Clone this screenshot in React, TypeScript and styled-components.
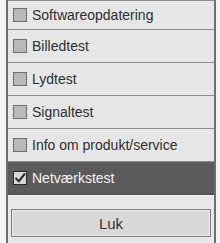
import React, { useState } from 'react';
import styled, { createGlobalStyle } from 'styled-components';

const GlobalStyle = createGlobalStyle`
  html, body {
    margin: 0;
    padding: 0;
    background: #f4f4f4;
  }
  body {
    font-family: "Liberation Sans", Arial, sans-serif;
  }
`;

const Page = styled.div`
  width: 220px;
  height: 243px;
  padding: 0 4px 0 6px;
  box-sizing: border-box;
  overflow: hidden;
`;

const Panel = styled.div`
  height: 243px;
  border-left: 2px solid #6e6e6e;
  border-right: 2px solid #6e6e6e;
  background: #e6e6e6;
  display: flex;
  flex-direction: column;
`;

const Row = styled.div<{ $active?: boolean; $first?: boolean }>`
  height: ${(p) => (p.$first ? '28px' : '32px')};
  flex: none;
  display: flex;
  align-items: center;
  gap: 5px;
  padding-left: 5px;
  border-bottom: 1px solid ${(p) => (p.$active ? '#4a4a4a' : '#8c8c8c')};
  border-top: ${(p) => (p.$first ? '1px solid #8c8c8c' : 'none')};
  background: ${(p) => (p.$active ? '#5b5b5b' : '#e6e6e6')};
  color: ${(p) => (p.$active ? '#f4f4f4' : '#2e2e2e')};
  font-size: 14px;
`;

const Box = styled.span<{ $active?: boolean }>`
  width: 12px;
  height: 12px;
  flex: none;
  border: 1px solid ${(p) => (p.$active ? '#2c2c2c' : '#707070')};
  background: ${(p) => (p.$active ? '#d8d8d8' : '#b9b9b9')};
  display: flex;
  align-items: center;
  justify-content: center;
`;

const Footer = styled.div`
  flex: 1;
  padding: 13px 3px 0 3px;
  background: #e8e8e8;
  border-top: 1px solid #f8f8f8;
`;

const Button = styled.button`
  width: 100%;
  height: 28px;
  background: #d8d8d8;
  border: 1px solid #7c7c7c;
  box-shadow: inset 0 0 0 1px #ececec;
  font-family: "Liberation Sans", Arial, sans-serif;
  font-size: 15px;
  color: #333;
  padding: 0;
`;

const items = [
  'Softwareopdatering',
  'Billedtest',
  'Lydtest',
  'Signaltest',
  'Info om produkt/service',
  'Netværkstest',
];

export default function App() {
  const [selected, setSelected] = useState(5);
  return (
    <Page>
      <GlobalStyle />
      <Panel>
        {items.map((label, i) => (
          <Row key={label} $first={i === 0} $active={i === selected} onClick={() => setSelected(i)}>
            <Box $active={i === selected}>
              {i === selected && (
                <svg width="12" height="12" viewBox="0 0 12 12">
                  <path d="M1.5 6 L4.8 9.2 L11 1.5" stroke="#2a2a2a" strokeWidth="2" fill="none" />
                </svg>
              )}
            </Box>
            {label}
          </Row>
        ))}
        <Footer>
          <Button>Luk</Button>
        </Footer>
      </Panel>
    </Page>
  );
}
